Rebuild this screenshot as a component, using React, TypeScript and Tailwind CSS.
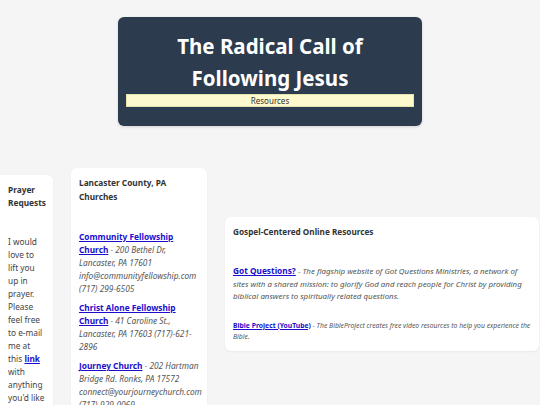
import React from "react";

const linkCls = "font-bold text-[#1a0dcc] underline";

const churches = [
  {
    name: "Community Fellowship Church",
    info: "200 Bethel Dr, Lancaster, PA 17601 info@communityfellowship.com (717) 299-6505",
  },
  {
    name: "Christ Alone Fellowship Church",
    info: "41 Caroline St., Lancaster, PA 17603 (717)-621-2896",
  },
  {
    name: "Journey Church",
    info: "202 Hartman Bridge Rd. Ronks, PA 17572 connect@yourjourneychurch.com (717)-929-0069",
  },
];

export default function App() {
  return (
    <div className="min-h-[405px] bg-[#f5f5f5] pt-[17px] font-['Noto_Sans',sans-serif] text-[#333]">
      {/* header */}
      <div className="mx-auto w-[304px] rounded-md bg-[#2c3b4e] px-2 pt-[13px] pb-[19px] shadow-[0_1px_3px_rgba(0,0,0,0.15)]">
        <h1 className="text-center text-[20.5px] font-bold leading-[32px] text-white">
          The Radical Call of
          <br />
          Following Jesus
        </h1>
        <div className="h-[13px] border border-[#e8e2b0] bg-[#fffacd] text-center text-[8px] leading-[11px] text-[#333]">
          Resources
        </div>
      </div>

      <div className="mt-[42px] flex items-start gap-[18px]">
        {/* prayer */}
        <div className="mt-[7px] w-[53px] shrink-0 rounded-r-md bg-white px-2 pt-2 pb-2 shadow-[0_1px_2px_rgba(0,0,0,0.05)]">
          <h2 className="mb-[26px] text-[8.3px] font-bold leading-[13px]">Prayer Requests</h2>
          <p className="text-[8.3px] leading-[13px] text-[#444]">
            I would love to lift you up in prayer. Please feel free to e-mail me at this{" "}
            <a className={linkCls}>link</a> with anything you'd like me to pray for.
          </p>
        </div>

        {/* churches */}
        <div className="w-[136px] shrink-0 rounded-md bg-white px-2 pt-[8px] pb-2 shadow-[0_1px_2px_rgba(0,0,0,0.05)]">
          <h2 className="mb-[26px] text-[8.3px] font-bold leading-[14px]">
            Lancaster County, PA Churches
          </h2>
          <div className="flex flex-col gap-[6px]">
            {churches.map((c) => (
              <p key={c.name} className="text-[8.3px] leading-[13px] text-[#555]">
                <a className={linkCls}>{c.name}</a> <i>- {c.info}</i>
              </p>
            ))}
          </div>
        </div>

        {/* online resources */}
        <div className="mt-[49px] w-[314px] shrink-0 rounded-md bg-white pt-2 pr-[6px] pb-[9px] pl-2 shadow-[0_1px_2px_rgba(0,0,0,0.05)]">
          <h2 className="mb-[26px] text-[8.2px] font-bold leading-[14px]">
            Gospel-Centered Online Resources
          </h2>
          <p className="text-[7.9px] leading-[12.5px] text-[#555]">
            <a className="text-[8.3px] font-bold text-[#1a0dcc] underline">Got Questions?</a>{" "}
            <i>
              - The flagship website of Got Questions Ministries, a network of sites with a shared
              mission: to glorify God and reach people for Christ by providing biblical answers to
              spiritually related questions.
            </i>
          </p>
          <p className="mt-[17px] text-[6.8px] leading-[11px] text-[#555]">
            <a className={linkCls}>Bible Project (YouTube)</a>{" "}
            <i>
              - The BibleProject creates free video resources to help you experience the Bible.
            </i>
          </p>
        </div>
      </div>
    </div>
  );
}
